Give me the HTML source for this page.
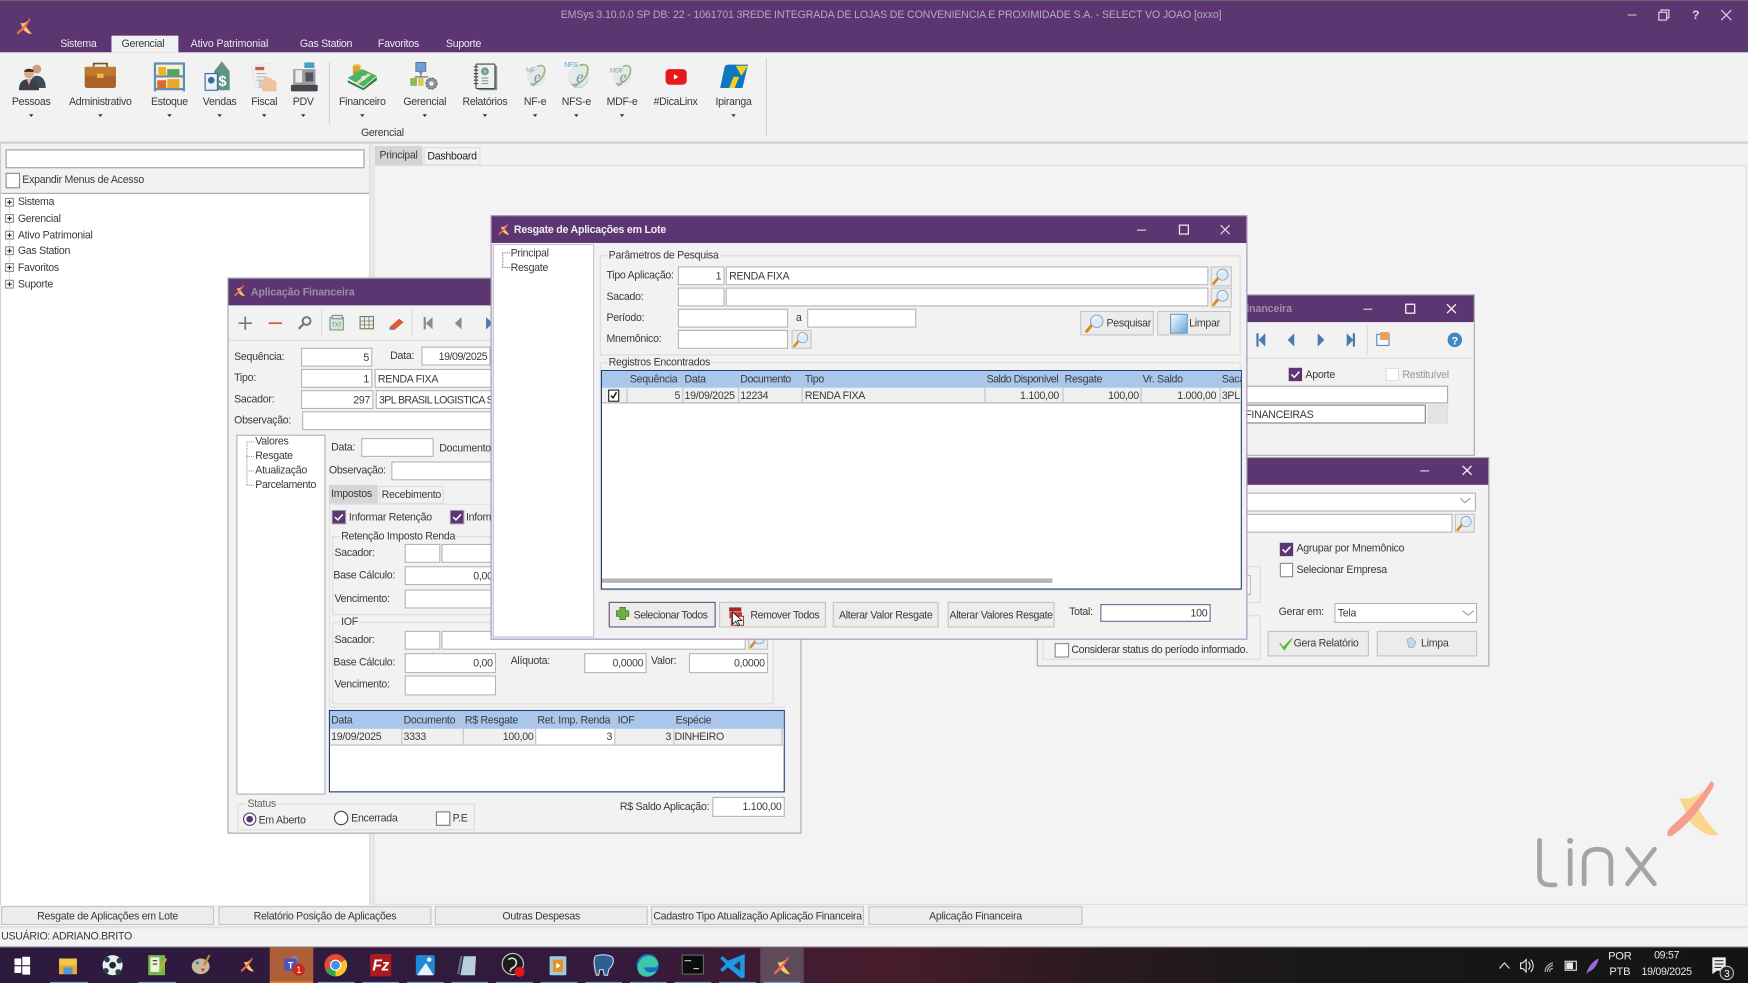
<!DOCTYPE html>
<html><head><meta charset="utf-8"><title>EMSys</title>
<style>
html,body{margin:0;padding:0;width:1748px;height:983px;overflow:hidden;background:#f2f2f2}
#s{position:absolute;left:0;top:0;width:1568px;height:882px;transform:scale(1.1148,1.11451);transform-origin:0 0;overflow:hidden;font-family:"Liberation Sans",sans-serif;font-size:9.5px;letter-spacing:-.25px;color:#3a3a3a;background:#f2f2f2}
#s div{position:absolute;box-sizing:border-box}
.t{white-space:nowrap;line-height:12px;height:12px;margin-top:1.2px}
.c{text-align:center;transform:translateX(-50%)}
.f{background:#fff;border:1px solid #b4b4b4;display:flex;align-items:center;padding:1px 2px 0;white-space:nowrap;overflow:hidden}
.r{justify-content:flex-end}
.b{background:#ececec;border:1px solid #c4c4c4;display:flex;align-items:center;justify-content:center;white-space:nowrap;overflow:hidden}
.p{background:#5b3670}
.g{border:1px solid #dcdcdc}
.l{background:#f2f2f2;padding:0 1px}
.w{color:#efe8f2}
.h{background:#a9c7ec}
svg{position:absolute;left:0;top:0;overflow:visible}
</style></head><body>
<div id="s">
<svg width="0" height="0" style="position:absolute"><defs>
<symbol id="lx" viewBox="0 0 48 56" overflow="visible"><path d="M11 16C20 19 27 15 33 9L27 24C34 36 41 43 47 50C37 52 30 47 21 38Z" fill="#f5c866"/><path d="M40 1C45 2 42 8 38 13C30 27 17 43 4 51C-1 53 -1 47 3 43C17 31 29 18 40 1Z" fill="#f0675a"/></symbol>
<symbol id="lb" viewBox="0 0 48 56" overflow="visible"><path d="M11 16C20 19 27 15 33 9L27 24C34 36 41 43 47 50C37 52 30 47 21 38Z" fill="#f9d68c"/><path d="M40 1C45 2 42 8 38 13C30 27 17 43 4 51C-1 53 -1 47 3 43C17 31 29 18 40 1Z" fill="#f99c90"/></symbol>
<symbol id="mg" viewBox="0 0 20 20" overflow="visible"><path d="M7 12L2 18" stroke="#d68a1e" stroke-width="3" stroke-linecap="round"/><circle cx="12" cy="8" r="6.2" fill="#d6ecfa" stroke="#8aa4b8"/><path d="M9 6a4 4 0 0 1 4-2" stroke="#fff" stroke-width="1.5" fill="none"/></symbol>
<symbol id="ge" viewBox="0 0 24 24" overflow="visible"><ellipse cx="12" cy="12" rx="9" ry="10" fill="#e4e8e8"/><path d="M6 20C13 21 22 12 20 4C18 1 14 2 13 3" stroke="#9db87c" stroke-width="1.6" fill="none"/><path d="M8 22l4-3" stroke="#a8b0b0" stroke-width="2"/><text x="13" y="18" font-size="15" font-style="italic" fill="#6f93a3" text-anchor="middle" font-family="Liberation Serif,serif">e</text></symbol>
</defs></svg>

<!-- top frame -->
<div style="left:0;top:0;width:1568px;height:47px;background:#5b3670"></div>
<div style="left:0;top:0;width:1568px;height:1px;background:#6a6670"></div>
<div class="t" style="left:503px;top:7px;color:#b7a9c0;letter-spacing:-.12px">EMSys 3.10.0.0 SP DB: 22 - 1061701 3REDE INTEGRADA DE LOJAS DE CONVENIENCIA E PROXIMIDADE S.A. - SELECT VO JOAO [oxxo]</div>
<div style="left:100px;top:32px;width:60px;height:15px;background:#f2f2f2"></div>
<div class="t w" style="left:54px;top:32.500px">Sistema</div>
<div class="t" style="left:109px;top:32.500px">Gerencial</div>
<div class="t w" style="left:171px;top:32.500px;letter-spacing:-.1px">Ativo Patrimonial</div>
<div class="t w" style="left:269px;top:32.500px">Gas Station</div>
<div class="t w" style="left:339px;top:32.500px">Favoritos</div>
<div class="t w" style="left:400px;top:32.500px">Suporte</div>

<!-- ribbon -->
<div style="left:0;top:47px;width:1568px;height:82px;background:#f2f2f2;border-bottom:2px solid #d2d2d2"></div>
<div class="t c" style="left:28px;top:84.500px">Pessoas</div>
<div class="t c" style="left:90px;top:84.500px">Administrativo</div>
<div class="t c" style="left:152px;top:84.500px">Estoque</div>
<div class="t c" style="left:197px;top:84.500px">Vendas</div>
<div class="t c" style="left:237px;top:84.500px">Fiscal</div>
<div class="t c" style="left:272px;top:84.500px">PDV</div>
<div class="t c" style="left:325px;top:84.500px">Financeiro</div>
<div class="t c" style="left:381px;top:84.500px">Gerencial</div>
<div class="t c" style="left:435px;top:84.500px">Relatórios</div>
<div class="t c" style="left:480px;top:84.500px">NF-e</div>
<div class="t c" style="left:517px;top:84.500px">NFS-e</div>
<div class="t c" style="left:558px;top:84.500px">MDF-e</div>
<div class="t c" style="left:606px;top:84.500px">#DicaLinx</div>
<div class="t c" style="left:658px;top:84.500px">Ipiranga</div>
<div class="t c" style="left:343px;top:112.500px">Gerencial</div>

<!-- left panel -->
<div style="left:0;top:174px;width:331px;height:638px;background:#fff"></div>
<div style="left:0;top:173px;width:331px;height:1px;background:#a9a9a9"></div>
<div style="left:0;top:129px;width:1px;height:683px;background:#d0d0d0"></div>
<div class="f" style="left:5px;top:134px;width:322px;height:17px;border-color:#9c9c9c"></div>
<div class="f" style="left:5px;top:155px;width:13px;height:14px;border-color:#8a8a8a"></div>
<div class="t" style="left:20px;top:155px">Expandir Menus de Acesso</div>
<div class="t" style="left:16px;top:175px">Sistema</div>
<div class="t" style="left:16px;top:190px">Gerencial</div>
<div class="t" style="left:16px;top:205px">Ativo Patrimonial</div>
<div class="t" style="left:16px;top:219px">Gas Station</div>
<div class="t" style="left:16px;top:234px">Favoritos</div>
<div class="t" style="left:16px;top:249px">Suporte</div>
<div style="left:331px;top:129px;width:4px;height:683px;background:#dcdcdc"></div>
<div style="left:332px;top:129px;width:3px;height:683px;background:#e8e8e8"></div>

<!-- right panel -->
<div style="left:335px;top:148px;width:1232px;height:664px;background:#f3f3f3;border:1px solid #dedede"></div>
<div class="b" style="left:336px;top:131px;width:43px;height:17px;background:#d4d4d4;border:0">Principal</div>
<div class="b" style="left:380px;top:132px;width:51px;height:16px;background:#f2f2f2;border-color:#dedede;color:#222">Dashboard</div>

<!-- bottom tabs -->
<div style="left:0;top:812px;width:1568px;height:38px;background:#f2f2f2;border-bottom:1px solid #a9a9a9"></div>
<div style="left:0;top:831px;width:1568px;height:2px;background:#e2e2e2"></div>
<div class="b" style="left:1px;top:813px;width:191px;height:17px;padding-top:1px">Resgate de Aplicações em Lote</div>
<div class="b" style="left:196px;top:813px;width:191px;height:17px;padding-top:1px">Relatório Posição de Aplicações</div>
<div class="b" style="left:390px;top:813px;width:191px;height:17px;padding-top:1px">Outras Despesas</div>
<div class="b" style="left:584px;top:813px;width:191px;height:17px;padding-top:1px;letter-spacing:-.3px">Cadastro Tipo Atualização Aplicação Financeira</div>
<div class="b" style="left:779px;top:813px;width:192px;height:17px;padding-top:1px">Aplicação Financeira</div>
<div class="t" style="left:1px;top:834px">USUÁRIO: ADRIANO.BRITO</div>

<!-- taskbar -->
<div style="left:0;top:850px;width:1568px;height:32px;background:linear-gradient(90deg,#2c1a3e 0,#341a3c 35%,#471c2c 51%,#2c1a1e 62%,#181818 75%,#141414 100%)"></div>
<div style="left:242px;top:850px;width:39px;height:32px;background:#ad6038"></div>
<div style="left:682px;top:850px;width:39px;height:32px;background:#5e4a58"></div>
<div class="t c" style="left:1453px;top:852px;color:#e8e8e8;font-size:10px">POR</div>
<div class="t c" style="left:1453px;top:866px;color:#e8e8e8;font-size:10px">PTB</div>
<div class="t c" style="left:1495px;top:851px;color:#e8e8e8">09:57</div>
<div class="t c" style="left:1495px;top:866px;color:#e8e8e8">19/09/2025</div>

<!-- base icons -->
<svg width="1568" height="882">
<!-- window controls -->
<g stroke="#d9d0de" fill="none" stroke-width="1.1">
<path d="M1460 13.500h8" stroke="#a99ab3" stroke-width="1.400"/>
<rect x="1488" y="11" width="7" height="7"/><path d="M1490 11V9h7v7h-2"/>
<path d="M1544 9l9 9M1553 9l-9 9"/>
</g>
<text x="1521" y="17" font-size="11" font-weight="bold" fill="#e0d8e4" text-anchor="middle" font-family="Liberation Sans">?</text>
<use href="#lx" x="15" y="16" width="14" height="16"/>
<!-- ribbon separators -->
<path d="M295.500 56V112M687.500 52V122" stroke="#d4d4d4"/>
<!-- dropdown arrows -->
<g fill="#333">
<path d="M26 102.500h4l-2 2.500zM88 102.500h4l-2 2.500zM150 102.500h4l-2 2.500zM195 102.500h4l-2 2.500zM235 102.500h4l-2 2.500zM270 102.500h4l-2 2.500zM323 102.500h4l-2 2.500zM379 102.500h4l-2 2.500zM433 102.500h4l-2 2.500zM478 102.500h4l-2 2.500zM515 102.500h4l-2 2.500zM556 102.500h4l-2 2.500zM656 102.500h4l-2 2.500z"/>
</g>
<!-- Pessoas -->
<g><circle cx="33" cy="62" r="4" fill="#c9a184"/><path d="M27 79c0-7 2-11 6-11s8 3 8 11z" fill="#3e4a5c"/><circle cx="26" cy="66" r="4.500" fill="#d8ae90"/><path d="M21.500 64c1-3 8-3 9 0l-1 .5h-7z" fill="#3a2a22"/><path d="M17 81c0-7 3-10 9-10s9 3 9 10z" fill="#3b3f48"/><path d="M24.500 71h3l-1.500 8z" fill="#b93a32"/><path d="M24 71l2 5 2-5z" fill="#eee" opacity=".7"/></g>
<!-- Administrativo -->
<g><path d="M84 60v-3h12v3" fill="none" stroke="#7a4a22" stroke-width="1.500"/><rect x="76" y="60" width="28" height="19" rx="2" fill="#a9632a"/><rect x="76" y="60" width="28" height="8" fill="#c07a30"/><rect x="87" y="66" width="6" height="4" fill="#eeb64a"/></g>
<!-- Estoque -->
<g><rect x="138" y="56" width="28" height="26" fill="#f6efe0"/><path d="M139 56v26M165 56v26M138 68.500h28M138 80h28M138 57h28" stroke="#5e8fb4" stroke-width="2"/><rect x="142" y="60" width="7" height="8" fill="#e7b42a"/><rect x="150" y="62" width="11" height="6" fill="#57a55a"/><rect x="141" y="72" width="8" height="7" fill="#dd6b2a"/><rect x="150" y="71" width="11" height="8" fill="#e9a82a"/></g>
<!-- Vendas -->
<g><path d="M192 64l7-9 7 9v17h-14z" fill="#5f9484"/><text x="199.500" y="77" font-size="13" font-weight="bold" fill="#fff" text-anchor="middle" font-family="Liberation Sans">$</text><rect x="184" y="66" width="11" height="15" fill="#eef2f6" stroke="#3a6aa0"/><circle cx="189.500" cy="72" r="3" fill="#3a6aa0"/></g>
<!-- Fiscal -->
<g><rect x="227" y="58" width="16" height="20" fill="#f5f0ea" stroke="#ddd" stroke-width=".5" transform="rotate(-10 234 68)"/><rect x="229" y="60" width="8" height="3" fill="#d05a4a"/><path d="M230 66h9M230 69h9M230 72h7" stroke="#a8b8c0"/><rect x="232" y="72" width="9" height="7" fill="#9fc8d8" opacity=".7"/><path d="M236 82c-4-6-1-12 4-13l8 4v9z" fill="#efc39e"/></g>
<!-- PDV -->
<g><rect x="273" y="56" width="9" height="5" fill="#4aa0c4"/><rect x="263" y="62" width="20" height="14" fill="#9a9ea2"/><rect x="265" y="63" width="6" height="11" fill="#eee"/><rect x="274" y="65" width="7" height="8" fill="#50545a"/><rect x="261" y="76" width="24" height="6" rx="1" fill="#46484c"/></g>
<!-- Financeiro -->
<g><ellipse cx="320" cy="59.500" rx="3.500" ry="2" fill="#e9be42"/><rect x="316.500" y="59.500" width="7" height="6" fill="#d6a830"/><ellipse cx="320" cy="65.500" rx="3.500" ry="2" fill="#c89828"/><path d="M312 72l14 7 12-10v3l-12 9-14-7z" fill="#2e7d46"/><path d="M312 70l13-8 13 6-12 10z" fill="#4cb265"/><path d="M319 74l11-8 3 1-11 8z" fill="#f1d7a8"/><circle cx="326" cy="70" r="2" fill="#d8efd8"/></g>
<!-- Gerencial -->
<g><rect x="373" y="56" width="9" height="8" fill="#6f9ed8" stroke="#4a6a90" stroke-width=".7"/><rect x="376" y="64" width="3" height="2" fill="#889"/><path d="M377.500 66v3M372 69h12" stroke="#667" fill="none"/><rect x="368" y="70" width="6" height="7" fill="#8cb95a"/><rect x="375" y="70" width="5" height="7" fill="#dccb5a"/><circle cx="387" cy="75" r="5" fill="#8a949c" stroke="#606a72" stroke-dasharray="2 1"/><circle cx="387" cy="75" r="2" fill="#f2f2f2"/></g>
<!-- Relatorios -->
<g><rect x="429" y="59" width="17" height="22" rx="1" fill="#8a8e92"/><rect x="427" y="57.500" width="17" height="22" rx="1" fill="#eef0f0" stroke="#44484c"/><path d="M425 60h4M425 63h4M425 66h4M425 69h4M425 72h4M425 75h4" stroke="#444"/><circle cx="435" cy="64" r="3.500" fill="#5ba0a8"/><circle cx="435" cy="64" r="1.500" fill="#e8b040"/><path d="M432 70h6M432 72.500h6M432 75h6" stroke="#8a9a9a"/></g>
<!-- globes -->
<use href="#ge" x="470" y="57" width="22" height="22"/>
<text x="472" y="65" font-size="6.500" fill="#9aa0a0" font-family="Liberation Sans" letter-spacing="-.2">NF</text>
<ellipse cx="519" cy="70" rx="9" ry="9" fill="#6fc0de" opacity=".55"/>
<use href="#ge" x="507" y="56" width="24" height="24"/>
<text x="506" y="60" font-size="6.500" fill="#5fa8c4" font-family="Liberation Sans" letter-spacing="-.2">NFS</text>
<use href="#ge" x="547" y="57" width="22" height="22"/>
<text x="547" y="65" font-size="6" fill="#9aa0a0" font-family="Liberation Sans" letter-spacing="-.3">MDF</text>
<!-- youtube -->
<rect x="597" y="62" width="19" height="14" rx="3.500" fill="#e8191c"/><path d="M604.500 66.500l4 2.500-4 2.500z" fill="#fff"/>
<!-- ipiranga -->
<path d="M650 60c1-2 3-2 4-2h17l-5 21h-20z" fill="#0f77c0"/><path d="M660 59h11l-6 9z" fill="#f2d21e"/><path d="M658 69h5l-4 10h-5z" fill="#f2d21e"/>
<!-- tree -->
<path d="M8.500 178V255" stroke="#b0b0b0" stroke-dasharray="1 1"/>
<g fill="#fff" stroke="#8f8f8f"><rect x="5" y="178" width="7" height="7"/><rect x="5" y="192.500" width="7" height="7"/><rect x="5" y="207.500" width="7" height="7"/><rect x="5" y="221.500" width="7" height="7"/><rect x="5" y="236.500" width="7" height="7"/><rect x="5" y="251.500" width="7" height="7"/></g>
<path d="M6.500 181.500h4M8.500 179.500v4M6.500 196h4M8.500 194v4M6.500 211h4M8.500 209v4M6.500 225h4M8.500 223v4M6.500 240h4M8.500 238v4M6.500 255h4M8.500 253v4" stroke="#222"/>
<!-- linx logo -->
<use href="#lb" x="1495" y="700" width="48" height="55"/>
<g fill="none" stroke="#a4a4a4" stroke-width="4.200" stroke-linecap="round" stroke-linejoin="round">
<path d="M1381 754V785C1381 791 1384 794 1391 794H1395"/>
<path d="M1408.500 763V793"/>
<path d="M1421 793V772C1421 765 1426 762 1433 762C1440 762 1445 765 1445 772V793"/>
<path d="M1460 762L1484 793M1484 762L1460 793"/>
</g>
<circle cx="1408.500" cy="754.500" r="2.700" fill="#a4a4a4"/>
<!-- taskbar icons -->
<g fill="#fff"><rect x="13" y="860" width="6" height="6"/><rect x="20" y="858.500" width="7" height="7.500"/><rect x="13" y="867" width="6" height="6"/><rect x="20" y="867" width="7" height="7.500"/></g>
<path d="M53 860h16v14H53z" fill="#f5c842"/><path d="M53 866h16v8H53z" fill="#e8a838"/><rect x="57" y="868" width="8" height="6" fill="#4a9ad8"/>
<circle cx="101" cy="866" r="9" fill="#e8eef0"/><circle cx="101" cy="866" r="3" fill="#1a2a30"/><circle cx="96" cy="861" r="2.500" fill="#264048"/><circle cx="107" cy="862" r="2.500" fill="#264048"/><circle cx="95" cy="871" r="2.500" fill="#264048"/><circle cx="106" cy="872" r="2.500" fill="#264048"/>
<rect x="133" y="857" width="15" height="18" fill="#78b84a"/><rect x="135" y="859" width="8" height="13" fill="#eef4e0"/><path d="M137 862h4M137 865h4" stroke="#333"/><path d="M143 871l6-11" stroke="#c8b030" stroke-width="2"/>
<ellipse cx="180" cy="867" rx="8" ry="7" fill="#c8b89a"/><circle cx="177" cy="864" r="1.500" fill="#3a8ac0"/><circle cx="182" cy="870" r="1.500" fill="#d05040"/><path d="M183 866l5-9" stroke="#c08040" stroke-width="2"/>
<use href="#lx" x="216" y="858" width="12" height="16"/>
<circle cx="264" cy="861" r="3" fill="#7d83d8"/><rect x="255" y="860" width="11" height="11" rx="1" fill="#4b53bc"/><text x="260.500" y="869" font-size="8" font-weight="bold" fill="#fff" text-anchor="middle" font-family="Liberation Sans">T</text><circle cx="268" cy="870" r="5.500" fill="#c8281e"/><text x="268" y="873" font-size="8" fill="#fff" text-anchor="middle" font-family="Liberation Sans">1</text>
<circle cx="301" cy="866" r="10" fill="#e04b3a"/><path d="M301 866L292 871A10 10 0 0 0 301 876z" fill="#2ea84f"/><path d="M301 866L310 861A10 10 0 0 1 301 876z" fill="#f7c52f"/><circle cx="301" cy="866" r="4.500" fill="#4a90e2" stroke="#fff"/>
<rect x="332" y="856" width="19" height="20" fill="#a81c1c"/><text x="341.500" y="871" font-size="14" font-weight="bold" font-style="italic" fill="#fff" text-anchor="middle" font-family="Liberation Sans">Fz</text>
<rect x="373" y="857" width="17" height="18" rx="2" fill="#1e8ad6"/><path d="M374 875l8-11 7 11z" fill="#e6f2fa"/><circle cx="385" cy="861" r="2" fill="#fff"/>
<path d="M416 858h11l-1 17h-13z" fill="#b8d0de"/><path d="M414 858l-3 16" stroke="#5a7484" stroke-width="2"/>
<circle cx="460" cy="865" r="9.500" fill="#1c1c1c" stroke="#cfcfcf" stroke-width="1"/><path d="M456 861c4-3 8 0 7 4s-6 3-5 7" stroke="#ddd" stroke-width="1.500" fill="none"/><circle cx="466" cy="872" r="4.500" fill="#e01a1a"/>
<rect x="493" y="858" width="15" height="17" rx="1" fill="#9ecbe0"/><rect x="496" y="861" width="9" height="11" fill="#e89020"/><path d="M499 864l4 2.500-4 2.500z" fill="#fff"/>
<path d="M534 858c4-2 14-2 16 2 1 4-2 8-4 10l-1 5h-3l-1-5h-3l-1 5h-2c-2-6-3-14-1-17z" fill="#2d5f92" stroke="#cfdbe8" stroke-width="1"/>
<circle cx="581" cy="866" r="10" fill="#1470c4"/><path d="M572 866c2-9 14-12 18-3 1 3 0 5-4 5h-8c0 4 5 6 11 3-3 6-11 7-15 3-2-2-2-5-2-8z" fill="#3dc6a8"/>
<rect x="612" y="857" width="19" height="17" fill="#0c0c0c" stroke="#666"/><path d="M614 862h6M622 869h5" stroke="#ccc"/>
<path d="M668 856v21l-3 1-12-10-5 4-2-2 5-5-5-5 2-2 5 4z" fill="#1e98e6"/><path d="M664 862v9l-6-4.500z" fill="#28354a"/>
<use href="#lx" x="694" y="858" width="15" height="18"/>
<g fill="#62a4d8"><rect x="45" y="881" width="34" height="1"/><rect x="124" y="881" width="34" height="1"/><rect x="285" y="881" width="33" height="1"/><rect x="325" y="881" width="33" height="1"/><rect x="365" y="881" width="33" height="1"/><rect x="405" y="881" width="33" height="1"/><rect x="445" y="881" width="33" height="1"/><rect x="485" y="881" width="33" height="1"/><rect x="525" y="881" width="33" height="1"/><rect x="565" y="881" width="33" height="1"/><rect x="605" y="881" width="33" height="1"/><rect x="645" y="881" width="33" height="1"/></g>
<rect x="242" y="880.500" width="39" height="1.500" fill="#f07a1c"/><rect x="685" y="881" width="33" height="1" fill="#62a4d8"/>
<!-- tray -->
<g stroke="#e8e8e8" fill="none"><path d="M1345 869l4.500-5 4.500 5"/><path d="M1364 864h2l3-3v11l-3-3h-2zM1371 863c2 2 2 5 0 7M1373 861c3 3 3 8 0 11"/><path d="M1386 872c0-4 3-7 7-8M1388 872c0-3 2-5 5-6M1390 872c0-2 1-3 3-3" stroke="#bbb"/><rect x="1404" y="862.500" width="10" height="8"/><rect x="1405.500" y="864" width="5" height="5" fill="#e8e8e8"/></g>
<path d="M1423 874c1-6 6-12 11-14-1 6-5 11-9 12z" fill="#9a6ad8"/>
<path d="M1536 859h12v12h-8l-4 3z" fill="#eee"/><path d="M1538 862h8M1538 865h8M1538 868h6" stroke="#333"/><circle cx="1549" cy="873" r="6" fill="#222" stroke="#bbb"/><text x="1549" y="876.500" font-size="9" fill="#fff" text-anchor="middle" font-family="Liberation Sans">3</text>
</svg>

<!-- Window: Aplicacao Financeira -->
<div style="left:204px;top:249px;width:515px;height:499px;background:#f2f2f2;border:1px solid #a8a8a8"></div>
<div class="p" style="left:205px;top:250px;width:513px;height:24px"></div>
<div class="t" style="left:225px;top:255.500px;color:#9d8ea8;font-weight:bold;letter-spacing:-.1px">Aplicação Financeira</div>
<div style="left:205px;top:305px;width:513px;height:1px;background:#dcdcdc"></div>
<div class="t" style="left:210px;top:314px">Sequência:</div>
<div class="f r" style="left:270px;top:312px;width:64px;height:17px">5</div>
<div class="t" style="left:350px;top:313px">Data:</div>
<div class="f r" style="left:378px;top:311px;width:62px;height:17px;letter-spacing:-.4px">19/09/2025</div>
<div class="t" style="left:210px;top:333px">Tipo:</div>
<div class="f r" style="left:270px;top:331px;width:64px;height:17px">1</div>
<div class="f" style="left:336px;top:331px;width:110px;height:17px">RENDA FIXA</div>
<div class="t" style="left:210px;top:352px">Sacador:</div>
<div class="f r" style="left:270px;top:350px;width:65px;height:17px">297</div>
<div class="f" style="left:337px;top:350px;width:110px;height:17px;letter-spacing:-.55px">3PL BRASIL LOGISTICA S</div>
<div class="t" style="left:210px;top:371px">Observação:</div>
<div class="f" style="left:271px;top:369px;width:175px;height:17px"></div>
<div style="left:212px;top:390px;width:80px;height:323px;background:#fff;border:1px solid #b0b0b0"></div>
<div class="t" style="left:229px;top:390px">Valores</div>
<div class="t" style="left:229px;top:403px">Resgate</div>
<div class="t" style="left:229px;top:416px">Atualização</div>
<div class="t" style="left:229px;top:429px;letter-spacing:-.35px">Parcelamento</div>
<div class="t" style="left:297px;top:395px">Data:</div>
<div class="f" style="left:324px;top:393px;width:65px;height:17px"></div>
<div class="t" style="left:394px;top:396px">Documento</div>
<div class="t" style="left:295px;top:416px">Observação:</div>
<div class="f" style="left:351px;top:414px;width:95px;height:17px"></div>
<div class="b" style="left:295px;top:435px;width:44px;height:17px;background:#d6d6d6;border:0;justify-content:flex-start;padding-left:2px">Impostos</div>
<div class="b" style="left:340px;top:436px;width:58px;height:16px;background:#f2f2f2;border-color:#dcdcdc">Recebimento</div>
<div style="left:295px;top:452px;width:410px;height:183px;border:1px solid #e0e0e0;border-width:1px 0 1px 1px"></div>
<div class="t" style="left:313px;top:458px">Informar Retenção</div>
<div class="t" style="left:418px;top:458px">Informar</div>
<div class="g" style="left:298px;top:481px;width:396px;height:71px"></div>
<div class="t l" style="left:305px;top:475px">Retenção Imposto Renda</div>
<div class="t" style="left:300px;top:490px">Sacador:</div>
<div class="f" style="left:363px;top:488px;width:32px;height:17px"></div>
<div class="f" style="left:396px;top:488px;width:273px;height:17px"></div>
<div class="t" style="left:299px;top:510px">Base Cálculo:</div>
<div class="f r" style="left:363px;top:508px;width:82px;height:17px">0,00</div>
<div class="t" style="left:300px;top:531px">Vencimento:</div>
<div class="f" style="left:363px;top:529px;width:82px;height:17px"></div>
<div class="g" style="left:298px;top:558px;width:396px;height:74px"></div>
<div class="t l" style="left:305px;top:552px">IOF</div>
<div class="t" style="left:300px;top:568px">Sacador:</div>
<div class="f" style="left:363px;top:566px;width:32px;height:17px"></div>
<div class="f" style="left:396px;top:566px;width:273px;height:17px"></div>
<div class="b" style="left:671px;top:566px;width:18px;height:17px"></div>
<div class="t" style="left:299px;top:588px">Base Cálculo:</div>
<div class="f r" style="left:363px;top:586px;width:82px;height:18px">0,00</div>
<div class="t" style="left:458px;top:587px">Alíquota:</div>
<div class="f r" style="left:524px;top:586px;width:56px;height:18px">0,0000</div>
<div class="t" style="left:584px;top:587px">Valor:</div>
<div class="f r" style="left:618px;top:586px;width:71px;height:18px">0,0000</div>
<div class="t" style="left:300px;top:608px">Vencimento:</div>
<div class="f" style="left:363px;top:606px;width:82px;height:18px"></div>
<!-- grid 1 -->
<div style="left:295px;top:637px;width:409px;height:74px;background:#fff;border:1px solid #1f3b73"></div>
<div class="h" style="left:296px;top:638px;width:407px;height:16px"></div>
<div style="left:296px;top:654px;width:407px;height:15px;background:#f0f0f0;border-bottom:1px solid #bbb"></div>
<div style="left:481px;top:654px;width:70px;height:14px;background:#fff"></div>
<div style="left:360px;top:638px;width:1px;height:30px;background:#bcc4cc"></div>
<div style="left:415px;top:638px;width:1px;height:30px;background:#bcc4cc"></div>
<div style="left:480px;top:638px;width:1px;height:30px;background:#bcc4cc"></div>
<div style="left:551px;top:638px;width:1px;height:30px;background:#bcc4cc"></div>
<div style="left:604px;top:638px;width:1px;height:30px;background:#bcc4cc"></div>
<div style="left:701px;top:638px;width:1px;height:30px;background:#bcc4cc"></div>
<div class="t" style="left:297px;top:640px">Data</div>
<div class="t" style="left:362px;top:640px">Documento</div>
<div class="t" style="left:417px;top:640px">R$ Resgate</div>
<div class="t" style="left:482px;top:640px">Ret. Imp. Renda</div>
<div class="t" style="left:554px;top:640px">IOF</div>
<div class="t" style="left:606px;top:640px">Espécie</div>
<div class="t" style="left:297px;top:655px">19/09/2025</div>
<div class="t" style="left:362px;top:655px">3333</div>
<div class="t" style="left:451px;top:655px">100,00</div>
<div class="t" style="left:544px;top:655px">3</div>
<div class="t" style="left:597px;top:655px">3</div>
<div class="t" style="left:605px;top:655px">DINHEIRO</div>
<div class="g" style="left:213px;top:721px;width:213px;height:24px"></div>
<div class="t l" style="left:221px;top:715px;color:#666">Status</div>
<div class="t" style="left:232px;top:730px">Em Aberto</div>
<div class="t" style="left:315px;top:728px">Encerrada</div>
<div class="f" style="left:391px;top:728px;width:13px;height:13px;border-color:#777"></div>
<div class="t" style="left:406px;top:728px">P.E</div>
<div class="t" style="left:556px;top:718px">R$ Saldo Aplicação:</div>
<div class="f r" style="left:639px;top:715px;width:65px;height:18px">1.100,00</div>
<svg width="1568" height="882">
<use href="#lx" x="210" y="255" width="10" height="12"/>
<g stroke="#777" stroke-width="1.500"><path d="M214 290h12M220 284v12"/></g><path d="M241 290h12" stroke="#d05a3a" stroke-width="1.500"/>
<circle cx="275" cy="288" r="3.500" fill="none" stroke="#777" stroke-width="1.800"/><path d="M272 291l-4 4" stroke="#777" stroke-width="2"/>
<path d="M288.500 278V302M369.500 278V302" stroke="#d8d8d8"/>
<rect x="296" y="285" width="12" height="11" fill="#d8e8d8" stroke="#7a9a8a"/><rect x="298" y="283" width="9" height="3" fill="#e8e8e8" stroke="#888"/><text x="302" y="293" font-size="5" fill="#5a7a6a" text-anchor="middle" font-family="Liberation Sans">TXT</text>
<rect x="323" y="284" width="12" height="11" fill="#eef2e8" stroke="#6f7f6a"/><path d="M323 288h12M323 291.500h12M327 284v11M331 284v11" stroke="#6f7f6a" stroke-width=".7"/>
<path d="M350 293l8-7 4 3-8 7h-3z" fill="#d85a3a"/><path d="M350 293l3 3h-3l-1-1z" fill="#5a8ac8"/>
<path d="M381 284.500v11" stroke="#8a8a8a" stroke-width="2"/><path d="M388 284.500v11l-6-5.500z" fill="#8a8a8a"/>
<path d="M414 284.500v11l-6-5.500z" fill="#8a8a8a"/>
<path d="M436 284.500v11l6-5.500z" fill="#4a7ab0"/>
<g><rect x="298" y="458" width="12" height="12" fill="#5b3670" stroke="#a896b4"/><path d="M300.500 464l2.500 2.500 4.500-5" stroke="#fff" fill="none" stroke-width="1.400"/>
<rect x="404" y="458" width="12" height="12" fill="#5b3670" stroke="#a896b4"/><path d="M406.500 464l2.500 2.500 4.500-5" stroke="#fff" fill="none" stroke-width="1.400"/></g>
<use href="#mg" x="672" y="567" width="15" height="15"/>
<path d="M221 396.500h7M221 409.500h7M221 422.500h7M221 435.500h7M221.500 396v40" stroke="#999" stroke-dasharray="1 1"/>
<circle cx="224" cy="735" r="5.500" fill="#fff" stroke="#5b3670"/><circle cx="224" cy="735" r="3" fill="#5b3670"/>
<circle cx="306" cy="734" r="6" fill="#fff" stroke="#444"/>
</svg>

<!-- back window right -->
<div style="left:1100px;top:264px;width:223px;height:145px;background:#f2f2f2;border:1px solid #a8a8a8"></div>
<div class="p" style="left:1100px;top:265px;width:222px;height:24px"></div>
<div class="t" style="left:1118px;top:270.500px;color:#9d8ea8;font-weight:bold;letter-spacing:-.1px">inanceira</div>
<div style="left:1100px;top:321px;width:221px;height:1px;background:#dcdcdc"></div>
<div class="t" style="left:1171px;top:330px">Aporte</div>
<div class="t" style="left:1258px;top:330px;color:#999">Restituível</div>
<div class="f" style="left:1243px;top:330px;width:12px;height:12px;border-color:#ddd"></div>
<div class="f" style="left:1100px;top:346px;width:199px;height:16px;border-color:#a8a8a8"></div>
<div class="f" style="left:1100px;top:363px;width:179px;height:17px;border-color:#8a7a96;padding-left:16px">FINANCEIRAS</div>
<div class="b" style="left:1281px;top:363px;width:18px;height:17px;background:#e4e4e4;border-color:#ddd"></div>

<!-- report window -->
<div style="left:930px;top:410px;width:406px;height:188px;background:#f2f2f2;border:1px solid #a8a8a8"></div>
<div class="p" style="left:931px;top:411px;width:404px;height:24px"></div>
<div class="f" style="left:1100px;top:442px;width:224px;height:17px"></div>
<div class="f" style="left:1100px;top:461px;width:203px;height:17px"></div>
<div class="b" style="left:1305px;top:461px;width:18px;height:17px"></div>
<div class="t" style="left:1163px;top:486px">Agrupar por Mnemônico</div>
<div class="f" style="left:1148px;top:505px;width:12px;height:13px;border-color:#888"></div>
<div class="t" style="left:1163px;top:505px">Selecionar Empresa</div>
<div class="g" style="left:1100px;top:508px;width:31px;height:33px"></div>
<div class="f" style="left:1100px;top:516px;width:22px;height:18px"></div>
<div class="g" style="left:935px;top:552px;width:196px;height:40px"></div>
<div class="f" style="left:946px;top:577px;width:13px;height:13px;border-color:#888"></div>
<div class="t" style="left:961px;top:577px;letter-spacing:-.3px">Considerar status do período informado.</div>
<div class="t" style="left:1147px;top:543px">Gerar em:</div>
<div class="f" style="left:1197px;top:541px;width:128px;height:18px">Tela</div>
<div class="b" style="left:1137px;top:566px;width:91px;height:23px;padding-left:14px">Gera Relatório</div>
<div class="b" style="left:1235px;top:566px;width:90px;height:23px;padding-left:14px">Limpa</div>
<svg width="1568" height="882">
<g stroke="#eee" stroke-width="1.200" fill="none">
<path d="M1223 277.500h8" stroke="#bbaec4" stroke-width="1.400"/><rect x="1261" y="273" width="8" height="8"/><path d="M1298 273l8 8M1306 273l-8 8"/>
<path d="M1274 422.500h8" stroke="#bbaec4" stroke-width="1.400"/><path d="M1312 418l8 8M1320 418l-8 8"/>
</g>
<g fill="#4a7ab0"><path d="M1128 299v12" stroke="#4a7ab0" stroke-width="2"/><path d="M1135 299v12l-6-6z"/><path d="M1161 299v12l-6-6z"/><path d="M1182 299v12l6-6z"/><path d="M1208 299v12l6-6z"/><path d="M1214.500 299v12" stroke="#4a7ab0" stroke-width="2"/></g>
<path d="M1226.500 292V318" stroke="#d8d8d8"/>
<rect x="1235" y="300" width="11" height="10" fill="#f5f8fb" stroke="#5a8ac0"/><rect x="1238" y="298" width="8" height="7" fill="#e8a05a"/>
<circle cx="1305" cy="305" r="6.500" fill="#3f87c0"/><text x="1305" y="309" font-size="10" font-weight="bold" fill="#fff" text-anchor="middle" font-family="Liberation Sans">?</text>
<rect x="1156" y="330" width="12" height="12" fill="#5b3670"/><path d="M1158.500 336l2.500 2.500 4.500-5" stroke="#fff" fill="none" stroke-width="1.400"/>
<rect x="1148" y="487" width="12" height="12" fill="#5b3670"/><path d="M1150.500 493l2.500 2.500 4.500-5" stroke="#fff" fill="none" stroke-width="1.400"/>
<path d="M1310 447l4 4 5-4M1312 548l5 4 5-4" stroke="#999" fill="none"/>
<use href="#mg" x="1306" y="462" width="15" height="15"/>
<path d="M1148 577l3 4 8-8-7 10z" fill="#5cb83a" stroke="#5cb83a"/>
<path d="M1262 574l4-2 4 4-2 5-4 0z" fill="#c9d8e8" stroke="#9aaab8" stroke-width=".7"/>
</svg>

<!-- Front dialog -->
<div style="left:440px;top:193px;width:679px;height:381px;background:#f2f2f2;border:1px solid #a78fb8"></div>
<div class="p" style="left:441px;top:194px;width:677px;height:24px"></div>
<div class="t" style="left:461px;top:200px;color:#f2eef5;font-weight:bold;letter-spacing:-.2px">Resgate de Aplicações em Lote</div>
<div style="left:442px;top:219px;width:91px;height:353px;background:#fff;border:1px solid #c8bcd2"></div>
<div class="t" style="left:458px;top:221px">Principal</div>
<div class="t" style="left:458px;top:234px">Resgate</div>
<div class="g" style="left:538px;top:229px;width:575px;height:90px"></div>
<div class="t l" style="left:545px;top:223px">Parâmetros de Pesquisa</div>
<div class="t" style="left:544px;top:241px">Tipo Aplicação:</div>
<div class="f r" style="left:608px;top:239px;width:42px;height:17px">1</div>
<div class="f" style="left:651px;top:239px;width:433px;height:17px">RENDA FIXA</div>
<div class="b" style="left:1086px;top:239px;width:19px;height:18px"></div>
<div class="t" style="left:544px;top:260px">Sacado:</div>
<div class="f" style="left:608px;top:258px;width:42px;height:17px"></div>
<div class="f" style="left:651px;top:258px;width:433px;height:17px"></div>
<div class="b" style="left:1086px;top:258px;width:19px;height:18px"></div>
<div class="t" style="left:544px;top:279px">Período:</div>
<div class="f" style="left:608px;top:277px;width:99px;height:17px"></div>
<div class="t" style="left:714px;top:279px">a</div>
<div class="f" style="left:724px;top:277px;width:98px;height:17px"></div>
<div class="t" style="left:544px;top:298px">Mnemônico:</div>
<div class="f" style="left:608px;top:296px;width:99px;height:17px"></div>
<div class="b" style="left:710px;top:296px;width:18px;height:17px"></div>
<div class="b" style="left:969px;top:279px;width:66px;height:22px;padding-left:21px;padding-top:1px">Pesquisar</div>
<div class="b" style="left:1038px;top:279px;width:66px;height:22px;padding-left:19px;padding-top:1px">Limpar</div>
<div class="g" style="left:538px;top:325px;width:575px;height:205px"></div>
<div class="t l" style="left:545px;top:319px">Registros Encontrados</div>
<!-- grid 2 -->
<div style="left:539px;top:332px;width:575px;height:197px;background:#fff;border:1px solid #1f3b73"></div>
<div class="h" style="left:540px;top:333px;width:573px;height:15px"></div>
<div style="left:540px;top:348px;width:573px;height:14px;background:#efefef;border-bottom:1px solid #b0b0b0"></div>
<div style="left:562px;top:333px;width:1px;height:28px;background:#bcc4cc"></div>
<div style="left:612px;top:333px;width:1px;height:28px;background:#bcc4cc"></div>
<div style="left:662px;top:333px;width:1px;height:28px;background:#bcc4cc"></div>
<div style="left:719px;top:333px;width:1px;height:28px;background:#bcc4cc"></div>
<div style="left:883px;top:333px;width:1px;height:28px;background:#bcc4cc"></div>
<div style="left:953px;top:333px;width:1px;height:28px;background:#bcc4cc"></div>
<div style="left:1023px;top:333px;width:1px;height:28px;background:#bcc4cc"></div>
<div style="left:1094px;top:333px;width:1px;height:28px;background:#bcc4cc"></div>
<div class="t" style="left:565px;top:334px">Sequência</div>
<div class="t" style="left:614px;top:334px">Data</div>
<div class="t" style="left:664px;top:334px;letter-spacing:-.35px">Documento</div>
<div class="t" style="left:722px;top:334px">Tipo</div>
<div class="t" style="left:885px;top:334px;letter-spacing:-.45px">Saldo Disponível</div>
<div class="t" style="left:955px;top:334px">Resgate</div>
<div class="t" style="left:1025px;top:334px">Vr. Saldo</div>
<div style="left:1096px;top:335px;width:17px;height:12px;overflow:hidden;line-height:12px">Sacado</div>
<div class="t" style="left:605px;top:349px">5</div>
<div class="t" style="left:614px;top:349px">19/09/2025</div>
<div class="t" style="left:664px;top:349px">12234</div>
<div class="t" style="left:722px;top:349px">RENDA FIXA</div>
<div class="t" style="left:915px;top:349px">1.100,00</div>
<div class="t" style="left:994px;top:349px">100,00</div>
<div class="t" style="left:1056px;top:349px">1.000,00</div>
<div style="left:1096px;top:350px;width:17px;height:12px;overflow:hidden;line-height:12px">3PL</div>
<div style="left:540px;top:519px;width:404px;height:4px;background:#b5b5b5"></div>
<div class="b" style="left:546px;top:540px;width:96px;height:23px;border:1px solid #6b5480;padding-left:15px;padding-top:1px;letter-spacing:-.4px">Selecionar Todos</div>
<div class="b" style="left:645px;top:540px;width:96px;height:23px;padding-left:22px;padding-top:1px;letter-spacing:-.35px">Remover Todos</div>
<div class="b" style="left:747px;top:540px;width:95px;height:23px;padding-top:1px;letter-spacing:-.3px">Alterar Valor Resgate</div>
<div class="b" style="left:850px;top:540px;width:96px;height:23px;padding-top:1px;letter-spacing:-.33px">Alterar Valores Resgate</div>
<div class="t" style="left:959px;top:543px">Total:</div>
<div class="f r" style="left:987px;top:542px;width:99px;height:16px;border-color:#7a6490">100</div>
<svg width="1568" height="882">
<use href="#lx" x="447" y="200" width="10" height="12"/>
<g stroke="#ddd" fill="none" stroke-width="1.100"><path d="M1020 206.500h8" stroke="#bbaec4" stroke-width="1.400"/><rect x="1058" y="202" width="8" height="8" stroke="#eee"/><path d="M1095 202l8 8M1103 202l-8 8"/></g>
<path d="M450.500 227h7M450.500 240h7M451 227v13" stroke="#777" stroke-dasharray="1 1"/>
<use href="#mg" x="1087" y="240" width="16" height="16"/><use href="#mg" x="1087" y="259" width="16" height="16"/><use href="#mg" x="711" y="297" width="15" height="15"/>
<use href="#mg" x="973" y="281" width="18" height="18"/>
<defs><linearGradient id="lim" x1="0" x2="1" y1="0" y2="1"><stop offset="0" stop-color="#fff"/><stop offset="1" stop-color="#5aa4e0"/></linearGradient></defs>
<rect x="1050" y="282" width="15" height="17" fill="url(#lim)" stroke="#7a9ab8"/>
<rect x="546" y="350" width="9" height="10" fill="#fff" stroke="#222"/><path d="M548 355l2 2 3-5" stroke="#111" fill="none" stroke-width="1.300"/>
<path d="M556 545h5v3h3v5h-3v3h-5v-3h-3v-5h3z" fill="#6fae3f" stroke="#4a7a2a" stroke-width=".7"/>
<rect x="654" y="545" width="11" height="6" fill="#a02828"/><rect x="654" y="549" width="12" height="6" fill="#c03a3a" stroke="#fff" stroke-width=".5"/><rect x="656" y="553" width="11" height="8" fill="#f5f0f0" stroke="#a02828" stroke-width=".8"/>
<path d="M657 549v11l3-2.500 2 4 1.500-.7-2-4h4z" fill="#fff" stroke="#222" stroke-width=".8"/>
</svg>
</div>
</body></html>
